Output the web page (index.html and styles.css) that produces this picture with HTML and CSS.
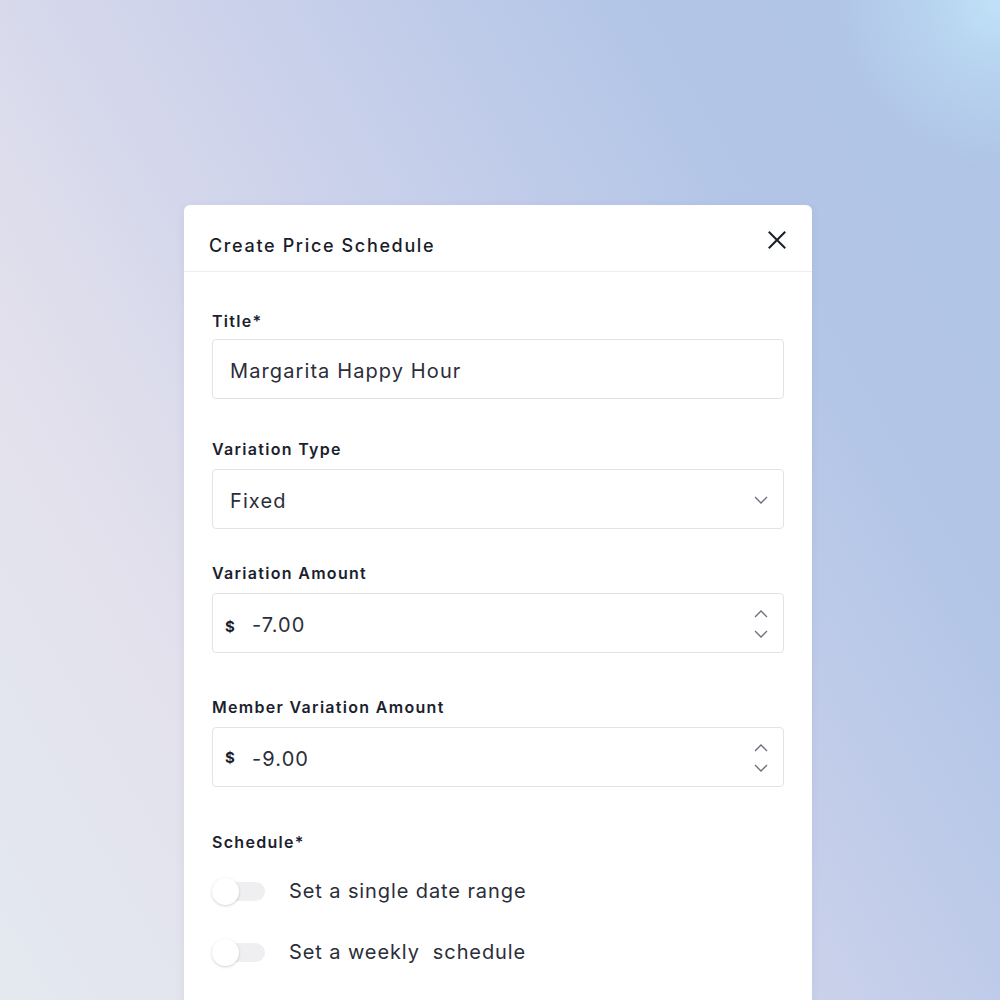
FILE: index.html
```html
<!DOCTYPE html>
<html lang="en">
<head>
<meta charset="utf-8">
<title>Create Price Schedule</title>
<link rel="stylesheet" href="styles.css">
</head>
<body>
<div class="page">
  <div class="modal">
    <div class="modal-header">
      <h2 class="modal-title">Create Price Schedule</h2>
      <button class="close-btn" aria-label="Close">
        <svg width="18" height="18" viewBox="0 0 18 18"><path d="M1.5 1.5 L16.5 16.5 M16.5 1.5 L1.5 16.5" stroke="#1a1d2b" stroke-width="2" stroke-linecap="square" fill="none"/></svg>
      </button>
    </div>
    <div class="modal-body">
      <div class="field">
        <label class="field-label label-tight">Title*</label>
        <div class="input"><span class="input-value">Margarita Happy Hour</span></div>
      </div>
      <div class="field field-gap-40">
        <label class="field-label">Variation Type</label>
        <div class="input">
          <span class="input-value">Fixed</span>
          <svg class="chev" width="14" height="8" viewBox="0 0 14 8"><path d="M1 1 L7 7 L13 1" stroke="#6b6e78" stroke-width="1.3" fill="none"/></svg>
        </div>
      </div>
      <div class="field field-gap-34">
        <label class="field-label">Variation Amount</label>
        <div class="input">
          <span class="currency">$</span>
          <span class="input-value">-7.00</span>
          <span class="spinner">
            <svg width="14" height="8" viewBox="0 0 14 8"><path d="M1 7 L7 1 L13 7" stroke="#6b6e78" stroke-width="1.3" fill="none"/></svg>
            <svg width="14" height="8" viewBox="0 0 14 8"><path d="M1 1 L7 7 L13 1" stroke="#6b6e78" stroke-width="1.3" fill="none"/></svg>
          </span>
        </div>
      </div>
      <div class="field field-gap-44">
        <label class="field-label">Member Variation Amount</label>
        <div class="input">
          <span class="currency currency-up">$</span>
          <span class="input-value">-9.00</span>
          <span class="spinner">
            <svg width="14" height="8" viewBox="0 0 14 8"><path d="M1 7 L7 1 L13 7" stroke="#6b6e78" stroke-width="1.3" fill="none"/></svg>
            <svg width="14" height="8" viewBox="0 0 14 8"><path d="M1 1 L7 7 L13 1" stroke="#6b6e78" stroke-width="1.3" fill="none"/></svg>
          </span>
        </div>
      </div>
      <div class="field field-gap-45">
        <label class="field-label">Schedule*</label>
        <div class="toggle-row">
          <span class="toggle"><span class="knob"></span></span>
          <span class="toggle-text">Set a single date range</span>
        </div>
        <div class="toggle-row">
          <span class="toggle"><span class="knob"></span></span>
          <span class="toggle-text">Set a weekly&nbsp; schedule</span>
        </div>
      </div>
    </div>
  </div>
</div>
</body>
</html>
```
FILE: styles.css
```css
* { box-sizing: border-box; }
html, body { margin: 0; padding: 0; height: 100%; }
body {
  font-family: Inter, "Liberation Sans", sans-serif;
  color: #1c1f2e;
  overflow: hidden;
}
.page {
  width: 1000px;
  height: 1000px;
  padding-top: 205px;
  padding-left: 184px;
  background:
    radial-gradient(circle at 100% 0%, rgba(192, 226, 248, 1) 0px, rgba(192, 226, 248, 0.5) 70px, rgba(192, 226, 248, 0) 170px),
    linear-gradient(60deg, #e4e9f0 0%, #e2e0ec 25%, #ccd2eb 50%, #b4c6e7 75%, #aec4e6 100%);
}
.modal {
  width: 628px;
  height: 830px;
  background: #fff;
  border-radius: 6px;
  box-shadow: 0 2px 10px rgba(60, 70, 120, 0.08);
}
.modal-header {
  height: 67px;
  padding: 31px 26px 0 25px;
  border-bottom: 1px solid #eceef3;
  display: flex;
  justify-content: space-between;
  align-items: flex-start;
}
.modal-title {
  margin: 0;
  font-size: 18px;
  line-height: 20px;
  font-weight: 500;
  letter-spacing: 1.65px;
  color: #1a1d2b;
}
.close-btn {
  border: 0;
  background: none;
  padding: 0;
  margin-top: -5px;
  width: 18px;
  height: 18px;
  display: block;
}
.close-btn svg { display: block; }
.modal-body {
  padding: 39px 28px 0 28px;
}
.field { display: flex; flex-direction: column; }
.field-gap-40 { margin-top: 40px; }
.field-gap-34 { margin-top: 34px; }
.field-gap-44 { margin-top: 44px; }
.field-gap-45 { margin-top: 45px; }
.field-label {
  font-size: 16px;
  line-height: 20px;
  font-weight: 600;
  letter-spacing: 1.3px;
  color: #1c1f2e;
  margin-bottom: 10px;
}
.label-tight { margin-bottom: 8px; }
.input {
  height: 60px;
  border: 1px solid #e1e3e8;
  border-radius: 4px;
  display: flex;
  align-items: center;
  padding: 3px 15px 0 17px;
  position: relative;
}
.input-value {
  font-size: 20px;
  color: #2b2e3a;
  letter-spacing: 1.1px;
  flex: 1;
}
.chev { display: block; margin-top: -2px; }
.currency {
  font-size: 15px;
  font-weight: 700;
  color: #1c1f2e;
  margin-top: 3px;
  width: 27px;
  margin-left: -5px;
}
.currency-up { margin-top: -2px; }
.spinner {
  display: flex;
  flex-direction: column;
  gap: 12px;
  margin-top: -2px;
}
.spinner svg { display: block; }
.toggle-row {
  display: flex;
  align-items: center;
  height: 26px;
  margin-top: 16px;
}
.toggle-row + .toggle-row { margin-top: 35px; }
.toggle {
  width: 53px;
  height: 19px;
  border-radius: 10px;
  background: #efeff2;
  position: relative;
  margin-right: 24px;
}
.knob {
  position: absolute;
  left: 0;
  top: -4px;
  width: 27px;
  height: 27px;
  border-radius: 50%;
  background: #fff;
  box-shadow: 0 1px 3px rgba(0, 0, 0, 0.18);
}
.toggle-text {
  font-size: 20px;
  color: #2b2e3a;
  letter-spacing: 0.9px;
}
```
